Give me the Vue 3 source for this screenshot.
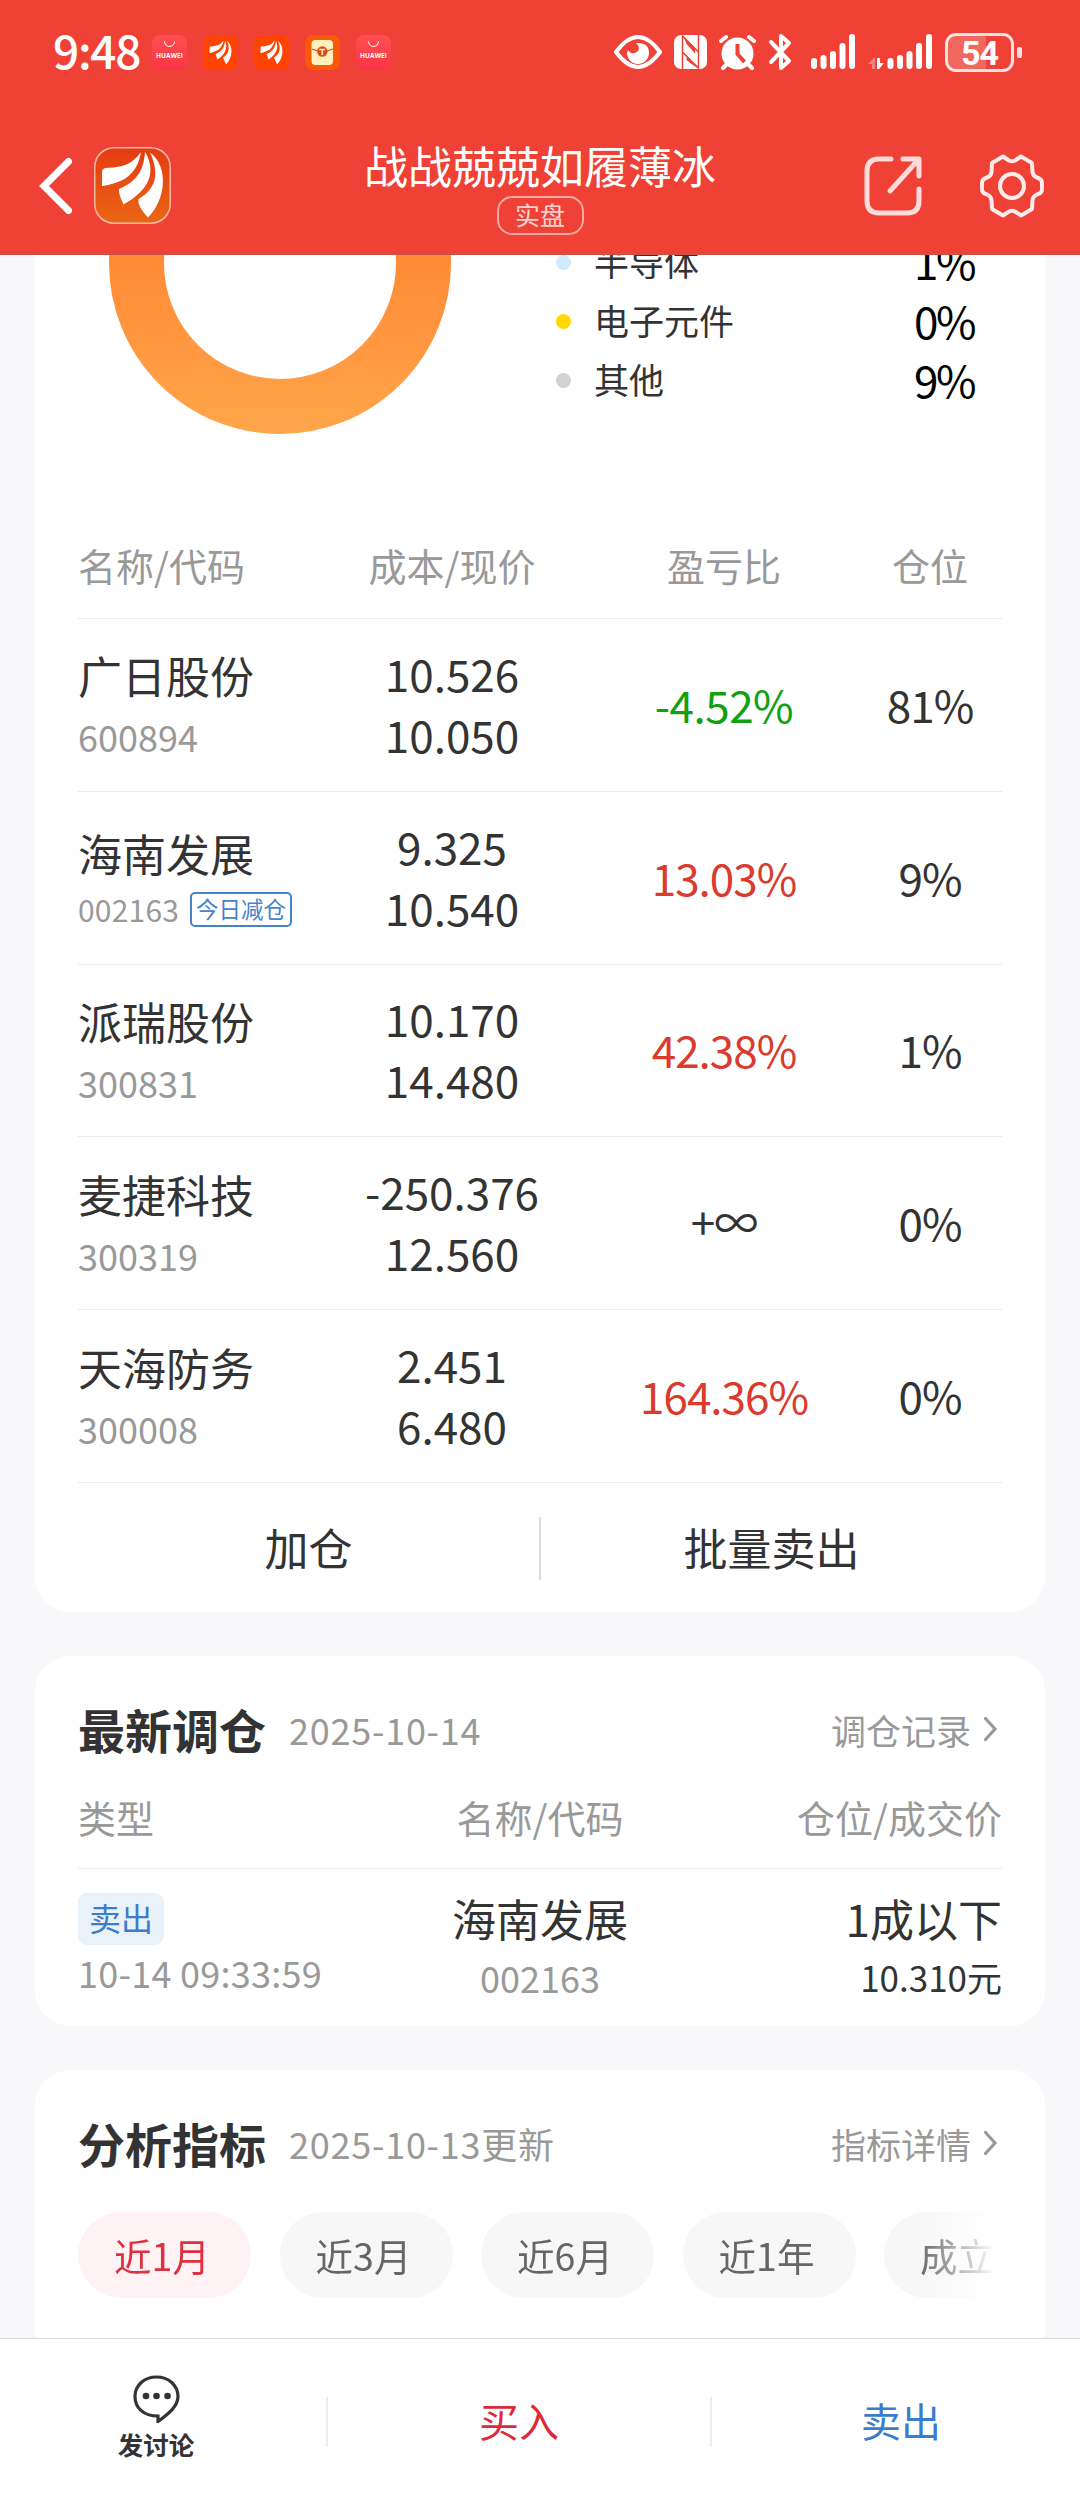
<!-- Portfolio detail -->
<script setup>
import { ref } from 'vue';

const sectors = [
  { name: '半导体', value: '1%', color: '#d0e9fb' },
  { name: '电子元件', value: '0%', color: '#ffd800' },
  { name: '其他', value: '9%', color: '#d2d2d2' }
];

const holdings = [
  { name: '广日股份', code: '600894', cost: '10.526', price: '10.050', profit: '-4.52%', trend: 'down', position: '81%' },
  { name: '海南发展', code: '002163', tag: '今日减仓', cost: '9.325', price: '10.540', profit: '13.03%', trend: 'up', position: '9%' },
  { name: '派瑞股份', code: '300831', cost: '10.170', price: '14.480', profit: '42.38%', trend: 'up', position: '1%' },
  { name: '麦捷科技', code: '300319', cost: '-250.376', price: '12.560', profit: '+∞', trend: 'flat', position: '0%' },
  { name: '天海防务', code: '300008', cost: '2.451', price: '6.480', profit: '164.36%', trend: 'up', position: '0%' }
];

const notices = ['huawei', 'fund', 'fund', 'packet', 'huawei'];
const periods = ['近1月', '近3月', '近6月', '近1年', '成立以来'];
const activePeriod = ref('近1月');
</script>

<template>
  <div class="page">
    <header class="header">
      <!-- Status bar -->
      <div class="status-bar">
        <span class="clock">9:48</span>
        <div class="notices">
          <span v-for="(item, index) in notices" :key="index" class="notice" :class="item">
            <svg v-if="item === 'huawei'" viewBox="0 0 35 35">
              <path d="M12.500 6.500a5 5 0 0 0 10 0" fill="none" stroke="#fff" stroke-width="1" />
              <text x="17.500" y="23" text-anchor="middle" textLength="27" class="brand">HUAWEI</text>
            </svg>
            <svg v-else-if="item === 'fund'" viewBox="-10 -10 97 97">
              <path d="M47 5C36 20 25 20 8.500 22L8 40C28 35 43 29 47 5Z" fill="#fff" />
              <path d="M51 5C50 22 44 34 25 43L30 58C50 45 60 27 51 5Z" fill="#fff" />
              <path d="M56 5C66 27 62 42 45 53L54 71C72 53 75 21 56 5Z" fill="#fff" />
            </svg>
            <svg v-else viewBox="0 0 35 35">
              <rect x="6.500" y="5" width="21.500" height="25" rx="4" fill="#fff0bd" />
              <path d="M7 14q10 5 21 0" fill="none" stroke="#cf5a20" stroke-width="1.200" />
              <circle cx="17.300" cy="16.500" r="5.200" fill="#dc4d18" />
              <path d="M14.500 14.500h5.600M17.300 14.500v5.500" stroke="#fff0bd" stroke-width="1.500" />
            </svg>
          </span>
        </div>
        <div class="status-icons">
          <!-- eye -->
          <svg class="eye" width="48" height="34" viewBox="0 0 48 34">
            <path d="M2 17Q24-13 46 17Q24 47 2 17Z" fill="none" stroke="#fff" stroke-width="4" stroke-linejoin="round" />
            <path d="M14 15q3 5 8 2.500Q28 14 22 8q13-1 13 10a11 11 0 0 1-22 0Z" fill="#fff" />
          </svg>
          <!-- nfc -->
          <svg class="nfc" width="33" height="34" viewBox="0 0 33 34">
            <rect width="33" height="34" rx="7" fill="#fff" />
            <path d="M8.500 34V1L24.500 17M24.500 0v33L8.500 17" fill="none" stroke="#ef4136" stroke-width="1.500" />
            <path d="M12.500 9l8.500 9.500v-5L9.500 1ZM12.500 20.500v4.500L23.500 33.500Z" fill="#ef4136" />
          </svg>
          <!-- alarm -->
          <svg class="alarm" width="37" height="36" viewBox="0 0 37 36">
            <circle cx="18.500" cy="19.500" r="16" fill="#fff" />
            <path d="M2 7l5-4M35 7l-5-4" stroke="#fff" stroke-width="4" stroke-linecap="round" />
            <path d="M8 30l-4 4M29 30l4 4" stroke="#fff" stroke-width="4" stroke-linecap="round" />
            <path d="M18.500 10v10l7 8" fill="none" stroke="#ef4136" stroke-width="4" />
          </svg>
          <!-- bluetooth -->
          <svg class="bluetooth" width="24" height="38" viewBox="0 0 24 38">
            <path d="M3 9l18 19-8 7V3l8 7L3 29" fill="none" stroke="#fff" stroke-width="4" stroke-linecap="round" stroke-linejoin="round" />
          </svg>
          <!-- signal -->
          <svg class="signal" width="46" height="36" viewBox="0 0 46 36">
            <path d="M3 27v5M12.500 24v8M22 20v12M31.500 12v20M41 3v29" stroke="#fff" stroke-width="6" stroke-linecap="round" />
          </svg>
          <svg class="signal-two" width="65" height="36" viewBox="0 0 65 36">
            <path d="M0 30l7-7v12H4v-5Z" fill="#fff" opacity=".35" />
            <path d="M9 24h3v5h4l-5 6H9Z" fill="#fff" />
            <path d="M22.500 27v5M32 24v8M41.500 20v12M51 12v20M61 3v29" stroke="#fff" stroke-width="6" stroke-linecap="round" />
          </svg>
          <!-- battery -->
          <span class="battery">54</span>
          <i class="battery-cap"></i>
        </div>
      </div>

      <!-- Nav bar -->
      <div class="nav-bar">
        <div class="nav-left">
          <svg width="34" height="58" viewBox="0 0 34 58">
            <path d="M29.500 4.500L5 29l24.500 24.500" fill="none" stroke="#fff" stroke-width="7" stroke-linecap="round" stroke-linejoin="miter" />
          </svg>
          <span class="app-logo">
            <svg viewBox="0 0 77 77">
              <path d="M47 5C36 20 25 20 12 21Q8 21.500 8 25L8 39C28 36 43 29 47 5Z" fill="#fff" />
              <path d="M51 4.500C50 22 44 34 25 42Q24 46 29.500 57.500C50 46 65 29 51 4.500Z" fill="#fff" />
              <path d="M56 5.500C66 27 62 42 44.500 52Q43 59 54 70.500C72 53 75 19 56 5.500Z" fill="#fff" />
            </svg>
          </span>
        </div>
        <div class="nav-title">
          <h1>战战兢兢如履薄冰</h1>
          <span class="real-badge">实盘</span>
        </div>
        <div class="nav-right">
          <svg width="60" height="60" viewBox="0 0 60 60" fill="none" stroke="#ffdcd9" stroke-width="5" stroke-linecap="round" stroke-linejoin="round">
            <path d="M27 3H15Q3 3 3 15v30q0 12 12 12h28q12 0 12-12V33" />
            <path d="M39 3h16v17M54 4L26 35" />
          </svg>
          <svg width="64" height="64" viewBox="0 0 64 64" fill="none" stroke="#ffeceb" stroke-width="4" stroke-linejoin="round">
            <path d="M23 2.500L29 6.500Q32 8 35 6.500L41 2.500L52 9L52.500 18Q53 22 57 23.500Q62 25 62 29V35Q62 39 57 40.500Q53 42 52.500 46L52 55L41 61.500L35 57.500Q32 56 29 57.500L23 61.500L12 55L11.500 46Q11 42 7 40.500Q2 39 2 35V29Q2 25 7 23.500Q11 22 11.500 18L12 9Z" />
            <circle cx="32" cy="32" r="12" />
          </svg>
        </div>
      </div>
    </header>

    <main class="content">
      <!-- Holdings -->
      <section class="card holdings-card">
        <div class="allocation">
          <svg class="donut" width="342" height="342" viewBox="0 0 342 342">
            <defs>
              <linearGradient id="donutFill" gradientUnits="userSpaceOnUse" x1="0" y1="0" x2="0" y2="342">
                <stop offset="0" stop-color="#ff7021" />
                <stop offset="1" stop-color="#ffa64b" />
              </linearGradient>
            </defs>
            <circle cx="171" cy="171" r="143.500" fill="none" stroke="url(#donutFill)" stroke-width="55" />
          </svg>
          <ul class="legend">
            <li v-for="sector in sectors" :key="sector.name">
              <i class="dot" :style="{ background: sector.color }"></i>
              <span class="legend-name">{{ sector.name }}</span>
              <span class="legend-value">{{ sector.value }}</span>
            </li>
          </ul>
        </div>

        <div class="holding-row table-head">
          <span>名称/代码</span>
          <span>成本/现价</span>
          <span>盈亏比</span>
          <span>仓位</span>
        </div>
        <div v-for="item in holdings" :key="item.code" class="holding-row">
          <div class="stock" :class="{ tagged: item.tag }">
            <div class="stock-name">{{ item.name }}</div>
            <div class="stock-code">
              {{ item.code }}
              <span v-if="item.tag" class="stock-tag">{{ item.tag }}</span>
            </div>
          </div>
          <div class="prices">
            <div>{{ item.cost }}</div>
            <div>{{ item.price }}</div>
          </div>
          <div class="percent" :class="item.trend">{{ item.profit }}</div>
          <div class="percent">{{ item.position }}</div>
        </div>
        <div class="card-actions">
          <button>加仓</button>
          <button>批量卖出</button>
        </div>
      </section>

      <!-- Latest trade -->
      <section class="card trade-card">
        <div class="card-title">
          <h2>最新调仓</h2>
          <span class="date">2025-10-14</span>
          <a class="more">调仓记录
            <svg width="15" height="26" viewBox="0 0 15 26"><path d="M2.500 2.500L12 13 2.500 23.500" fill="none" stroke="#999" stroke-width="3.200" stroke-linecap="round" /></svg>
          </a>
        </div>
        <div class="trade-row trade-head">
          <span>类型</span>
          <span>名称/代码</span>
          <span>仓位/成交价</span>
        </div>
        <div class="trade-row trade-body">
          <div class="trade-type">
            <span class="sell-tag">卖出</span>
            <div class="sub time">10-14 09:33:59</div>
          </div>
          <div>
            <div class="main-text">海南发展</div>
            <div class="sub">002163</div>
          </div>
          <div>
            <div class="main-text">1成以下</div>
            <div class="sub dark">10.310元</div>
          </div>
        </div>
      </section>

      <!-- Indicators -->
      <section class="card indicator-card">
        <div class="card-title">
          <h2>分析指标</h2>
          <span class="date">2025-10-13更新</span>
          <a class="more">指标详情
            <svg width="15" height="26" viewBox="0 0 15 26"><path d="M2.500 2.500L12 13 2.500 23.500" fill="none" stroke="#999" stroke-width="3.200" stroke-linecap="round" /></svg>
          </a>
        </div>
        <div class="periods">
          <button
            v-for="period in periods"
            :key="period"
            class="period"
            :class="{ active: period === activePeriod }"
            @click="activePeriod = period"
          >{{ period }}</button>
        </div>
      </section>
    </main>

    <footer class="bottom-bar">
      <div class="discuss">
        <svg width="47" height="48" viewBox="0 0 47 48">
          <path d="M25 46.500V41C10 41 2 32.500 2 21.500C2 10 11.500 2 23.500 2S45 10 45 21.500C45 31 36 38.500 25 46.500Z" fill="none" stroke="#333" stroke-width="3.200" />
          <circle cx="13" cy="21" r="3.300" fill="#333" />
          <circle cx="23.500" cy="21" r="3.300" fill="#333" />
          <circle cx="34.500" cy="21" r="3.300" fill="#333" />
        </svg>
        <span>发讨论</span>
      </div>
      <div class="trade-btn buy">买入</div>
      <div class="trade-btn sell">卖出</div>
    </footer>
  </div>
</template>

<style>
body {
  margin: 0;
}
</style>

<style scoped>
.page {
  display: flex;
  flex-direction: column;
  width: 1080px;
  height: 2504px;
  overflow: hidden;
  background: #f8f8fb;
  font-family: "Noto Sans CJK SC", "Noto Sans", sans-serif;
  color: #333;
}

.page *,
.page {
  box-sizing: border-box;
}

svg {
  display: block;
  flex: none;
}

button {
  border: none;
  background: none;
  padding: 0;
  font-family: inherit;
  color: inherit;
}

/* Header */
.header {
  flex: none;
  height: 255px;
  background: #ef4136;
  border-bottom: 1px solid #c4544b;
  color: #fff;
}

.status-bar {
  display: flex;
  align-items: center;
  height: 104px;
  padding: 0 58px 0 53px;
}

.clock {
  width: 99px;
  font-size: 46px;
  font-weight: 500;
  line-height: 60px;
  letter-spacing: -1.3px;
  margin-top: -6px;
}

.notices {
  display: flex;
  gap: 16px;
}

.notice {
  width: 35px;
  height: 35px;
  border-radius: 8px;
  overflow: hidden;
}

.notice.huawei {
  background: linear-gradient(#ff5052, #fb3347);
}

.notice.fund {
  background: #ff4300;
}

.notice.packet {
  background: #fa5a05;
}

.brand {
  fill: #fff;
  font-family: "Open Sans", sans-serif;
  font-size: 6.5px;
  font-weight: 700;
}

.status-icons {
  display: flex;
  align-items: center;
  margin-left: auto;
}

.nfc {
  margin-left: 12px;
}

.alarm {
  margin-left: 12px;
}

.bluetooth {
  margin-left: 12px;
}

.signal {
  margin-left: 19px;
}

.signal-two {
  margin-left: 11px;
}

.battery {
  width: 69px;
  height: 39px;
  margin-left: 12px;
  border: 3px solid #ffe3e0;
  border-radius: 11px;
  background: linear-gradient(90deg, #f2685f 60%, transparent 60%);
  font-family: Roboto, sans-serif;
  font-size: 34px;
  font-weight: 700;
  letter-spacing: -1px;
  line-height: 34px;
  text-align: center;
}

.battery-cap {
  width: 5px;
  height: 11px;
  margin-left: 3px;
  border-radius: 2px;
  background: #ffe3e0;
}

.nav-bar {
  display: grid;
  grid-template-columns: 300px 1fr 300px;
  height: 150px;
  padding: 0 36px 0 39px;
}

.nav-left {
  display: flex;
  align-items: center;
  gap: 21px;
  height: 163px;
}

.app-logo {
  width: 77px;
  height: 77px;
  border-radius: 20px;
  background: linear-gradient(#e53a13, #ea6714);
  box-shadow: inset 0 0 0 1.5px #f7b7a4;
}

.nav-title {
  display: flex;
  flex-direction: column;
  align-items: center;
  padding: 34px 3px 0 0;
}

.nav-title h1 {
  margin: 0;
  font-size: 44px;
  font-weight: 400;
  line-height: 54px;
  white-space: nowrap;
}

.real-badge {
  width: 87px;
  height: 39px;
  margin-top: 4px;
  border: 2px solid #f9a8a2;
  border-radius: 15px;
  font-size: 25px;
  line-height: 32px;
  text-align: center;
  color: #ffd3cf;
}

.nav-right {
  display: flex;
  align-items: center;
  justify-content: flex-end;
  gap: 56px;
  height: 163px;
}

/* Content */
.content {
  flex: 1;
  min-height: 0;
  overflow: hidden;
  padding: 0 35px;
}

.card {
  padding: 0 43px;
  border-radius: 35px;
  background: #fff;
}

.holdings-card {
  height: 1357px;
  border-radius: 0 0 35px 35px;
}

.allocation {
  display: flex;
  height: 255px;
}

.donut {
  margin: -163px 0 0 31px;
}

.legend {
  width: 418px;
  margin: -22px 0 0 105px;
  padding: 0;
  list-style: none;
}

.legend li {
  display: flex;
  align-items: center;
  height: 59px;
}

.dot {
  width: 15px;
  height: 15px;
  border-radius: 50%;
}

.legend-name {
  margin-left: 23px;
  font-size: 35px;
  line-height: 59px;
  margin-top: -4px;
}

.legend-value {
  margin-left: auto;
  font-size: 44px;
  line-height: 59px;
  letter-spacing: -2.5px;
  margin-top: -2px;
  color: #000;
}

.holding-row {
  display: grid;
  grid-template-columns: 236px 276px 268px 144px;
  align-items: center;
  height: 172.800px;
  border-bottom: 1.500px solid #ececec;
  font-size: 44px;
  text-align: center;
}

.holding-row > :first-child {
  text-align: left;
}

.table-head {
  height: 109px;
  font-size: 38px;
  color: #999;
}

.stock {
  padding-top: 3px;
}

.stock-name {
  line-height: 61px;
}

.stock-code {
  display: flex;
  align-items: center;
  font-size: 36px;
  line-height: 61px;
  color: #999;
}

.stock.tagged {
  padding-top: 12px;
}

.tagged .stock-name {
  line-height: 52px;
}

.tagged .stock-code {
  font-size: 30px;
  letter-spacing: 0.2px;
}

.stock-tag {
  flex: none;
  width: 102px;
  height: 35px;
  margin-left: 11px;
  border: 2px solid #4583cb;
  border-radius: 5px;
  font-size: 22.500px;
  line-height: 29px;
  letter-spacing: 0;
  text-align: center;
  color: #4583cb;
}

.prices {
  line-height: 61px;
  padding-bottom: 2px;
}

.percent {
  letter-spacing: -1px;
  padding-bottom: 2px;
}

.flat {
  padding-bottom: 4px;
}

.up {
  color: #d93b2d;
}

.down {
  color: #10a010;
  letter-spacing: -0.5px;
}

.card-actions {
  display: flex;
  align-items: center;
  height: 131px;
}

.card-actions button {
  flex: 1;
  height: 63px;
  font-size: 44px;
  line-height: 58px;
  padding-bottom: 3px;
}

.card-actions button + button {
  border-left: 2px solid #dcdcdc;
}

/* Cards with a title line */
.trade-card {
  height: 370px;
  margin-top: 44px;
}

.card-title {
  display: flex;
  align-items: center;
  height: 144px;
  padding-top: 2px;
}

.card-title h2 {
  margin: 0;
  font-size: 47px;
  font-weight: 700;
  line-height: 60px;
}

.date {
  margin-left: 23px;
  font-size: 36px;
  letter-spacing: 0.75px;
  color: #999;
}

.more {
  display: flex;
  align-items: center;
  gap: 12px;
  margin-left: auto;
  margin-right: 4px;
  font-size: 35px;
  color: #999;
}

.trade-row {
  display: grid;
  grid-template-columns: 1fr 1fr 1fr;
  text-align: center;
}

.trade-row > :first-child {
  text-align: left;
}

.trade-row > :last-child {
  text-align: right;
}

.trade-head {
  height: 69px;
  border-bottom: 1.500px solid #ececec;
  font-size: 38px;
  line-height: 34px;
  color: #999;
}

.trade-body {
  padding-top: 19px;
}

.main-text {
  font-size: 44px;
  line-height: 61px;
}

.sub {
  font-size: 36px;
  line-height: 56px;
  color: #999;
}

.sub.time {
  letter-spacing: 0.25px;
  line-height: 54px;
}

.sub.dark {
  color: #333;
  font-size: 35px;
}

.sell-tag {
  display: block;
  width: 86px;
  height: 52px;
  margin-top: 5px;
  border-radius: 9px;
  background: #e9f1fb;
  font-size: 32px;
  line-height: 49px;
  text-align: center;
  color: #3b7ccb;
}

.indicator-card {
  height: 420px;
  margin-top: 44px;
}

.indicator-card .card-title {
  height: 142px;
  padding-top: 4px;
}

.periods {
  display: flex;
  gap: 28.500px;
  width: 918px;
  overflow: hidden;
  -webkit-mask-image: linear-gradient(90deg, #000 91.500%, transparent);
  mask-image: linear-gradient(90deg, #000 91.500%, transparent);
}

.period {
  flex: none;
  min-width: 173px;
  height: 86px;
  padding: 0 41px 2px 36px;
  border-radius: 43px;
  background: #f7f7f7;
  font-size: 37.500px;
  white-space: nowrap;
  color: #666;
}

.period.active {
  background: #fef2f4;
  color: #dc3140;
}

/* Bottom bar */
.bottom-bar {
  flex: none;
  display: flex;
  align-items: center;
  height: 166px;
  border-top: 1.500px solid #dcdcdc;
  background: #fff;
}

.discuss {
  flex: none;
  display: flex;
  flex-direction: column;
  align-items: center;
  width: 326px;
  padding: 0 14px 5px 0;
  font-size: 25.500px;
  font-weight: 700;
  line-height: 38px;
}

.discuss span {
  margin-top: 2px;
}

.trade-btn {
  flex: none;
  width: 384px;
  height: 50px;
  border-left: 2px solid #ececec;
  font-size: 40px;
  line-height: 46px;
  text-align: center;
}

.buy {
  color: #dc2b3b;
}

.sell {
  width: 380px;
  color: #3b7ccb;
}
</style>
